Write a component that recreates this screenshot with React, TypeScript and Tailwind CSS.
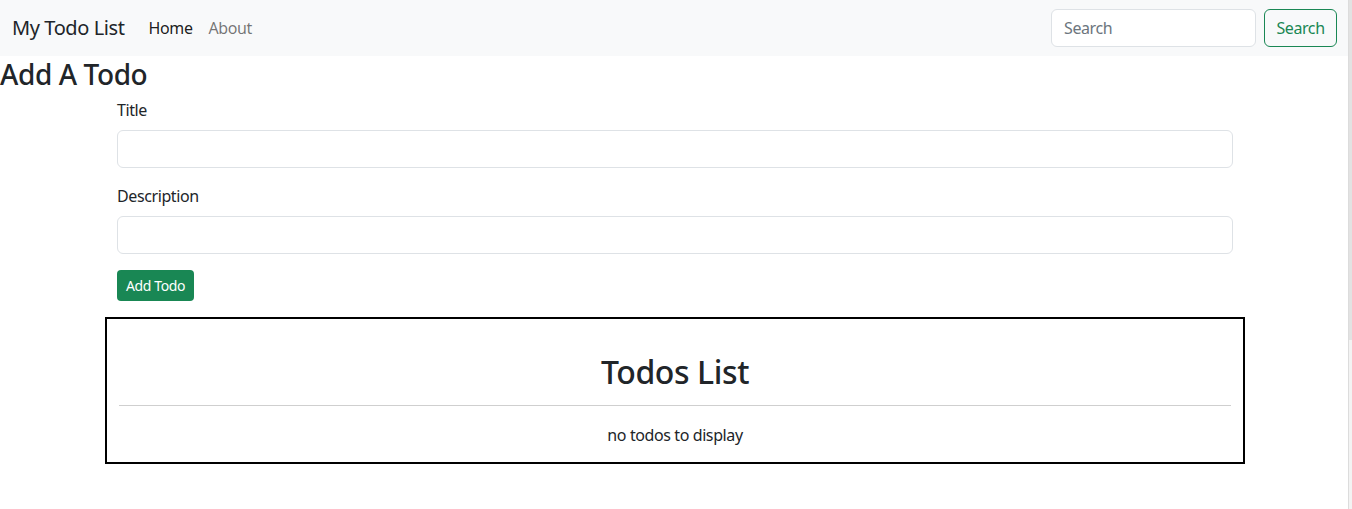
import React from "react";

const font = { fontFamily: '"Segoe UI", "Noto Sans", sans-serif' };

function Navbar() {
  return (
    <nav className="flex h-14 items-center justify-between bg-[#f8f9fa] pl-3 pr-[11px]">
      <div className="flex items-center">
        <a href="#" className="mr-4 py-[5px] text-xl leading-[30px] text-[#212529]">
          My Todo List
        </a>
        <ul className="flex">
          <li>
            <a href="#" className="block px-2 py-2 text-base leading-6 text-[rgba(0,0,0,0.9)]">
              Home
            </a>
          </li>
          <li>
            <a href="#" className="block px-2 py-2 text-base leading-6 text-[rgba(0,0,0,0.55)]">
              About
            </a>
          </li>
        </ul>
      </div>
      <form className="flex items-center" onSubmit={(e) => e.preventDefault()}>
        <input
          type="search"
          placeholder="Search"
          className="mr-2 h-[38px] w-[205px] rounded-md border border-[#dee2e6] bg-white px-3 text-base text-[#212529] placeholder:text-[#6c757d] outline-none"
        />
        <button className="h-[38px] w-[73px] rounded-md border border-[#198754] text-base text-[#198754]">
          Search
        </button>
      </form>
    </nav>
  );
}

function AddTodo() {
  return (
    <div>
      <h3 className="mb-[6px] text-[28px] font-medium leading-[36px] text-[#212529]">Add A Todo</h3>
      <div className="mx-auto w-[1140px] pl-[13px] pr-[11px]">
        <form onSubmit={(e) => e.preventDefault()}>
          <div className="mb-4">
            <label className="mb-2 block text-base leading-6 text-[#212529]">Title</label>
            <input
              type="text"
              className="block h-[38px] w-full rounded-md border border-[#dee2e6] px-3 outline-none"
            />
          </div>
          <div className="mb-4">
            <label className="mb-2 block text-base leading-6 text-[#212529]">Description</label>
            <input
              type="text"
              className="block h-[38px] w-full rounded-md border border-[#dee2e6] px-3 outline-none"
            />
          </div>
          <button className="h-[31px] w-[77px] rounded-[4px] bg-[#198754] text-sm text-white">
            Add Todo
          </button>
        </form>
      </div>
    </div>
  );
}

function Todos() {
  return (
    <div className="mx-auto mt-4 w-[1140px] translate-x-px border-2 border-black px-3 pt-[34px] pb-[15px]">
      <h2 className="text-center text-[32px] font-medium leading-[38px] text-[#212529]">
        Todos List
      </h2>
      <hr className="mt-[14px] border-t border-[#cfcfcf]" />
      <p className="mt-[17px] text-center text-base leading-6 text-[#212529]">no todos to display</p>
    </div>
  );
}

export default function App() {
  return (
    <div className="flex h-[509px] overflow-hidden bg-white tracking-[-0.025em]" style={font}>
      <main className="flex-1">
        <Navbar />
        <AddTodo />
        <Todos />
      </main>
      {/* fake scrollbar */}
      <div className="flex w-1 flex-col border-l border-[#dcdcdc] bg-[#f3f3f3]">
        <div className="h-[340px] bg-[#e2e2e2]" />
      </div>
    </div>
  );
}
